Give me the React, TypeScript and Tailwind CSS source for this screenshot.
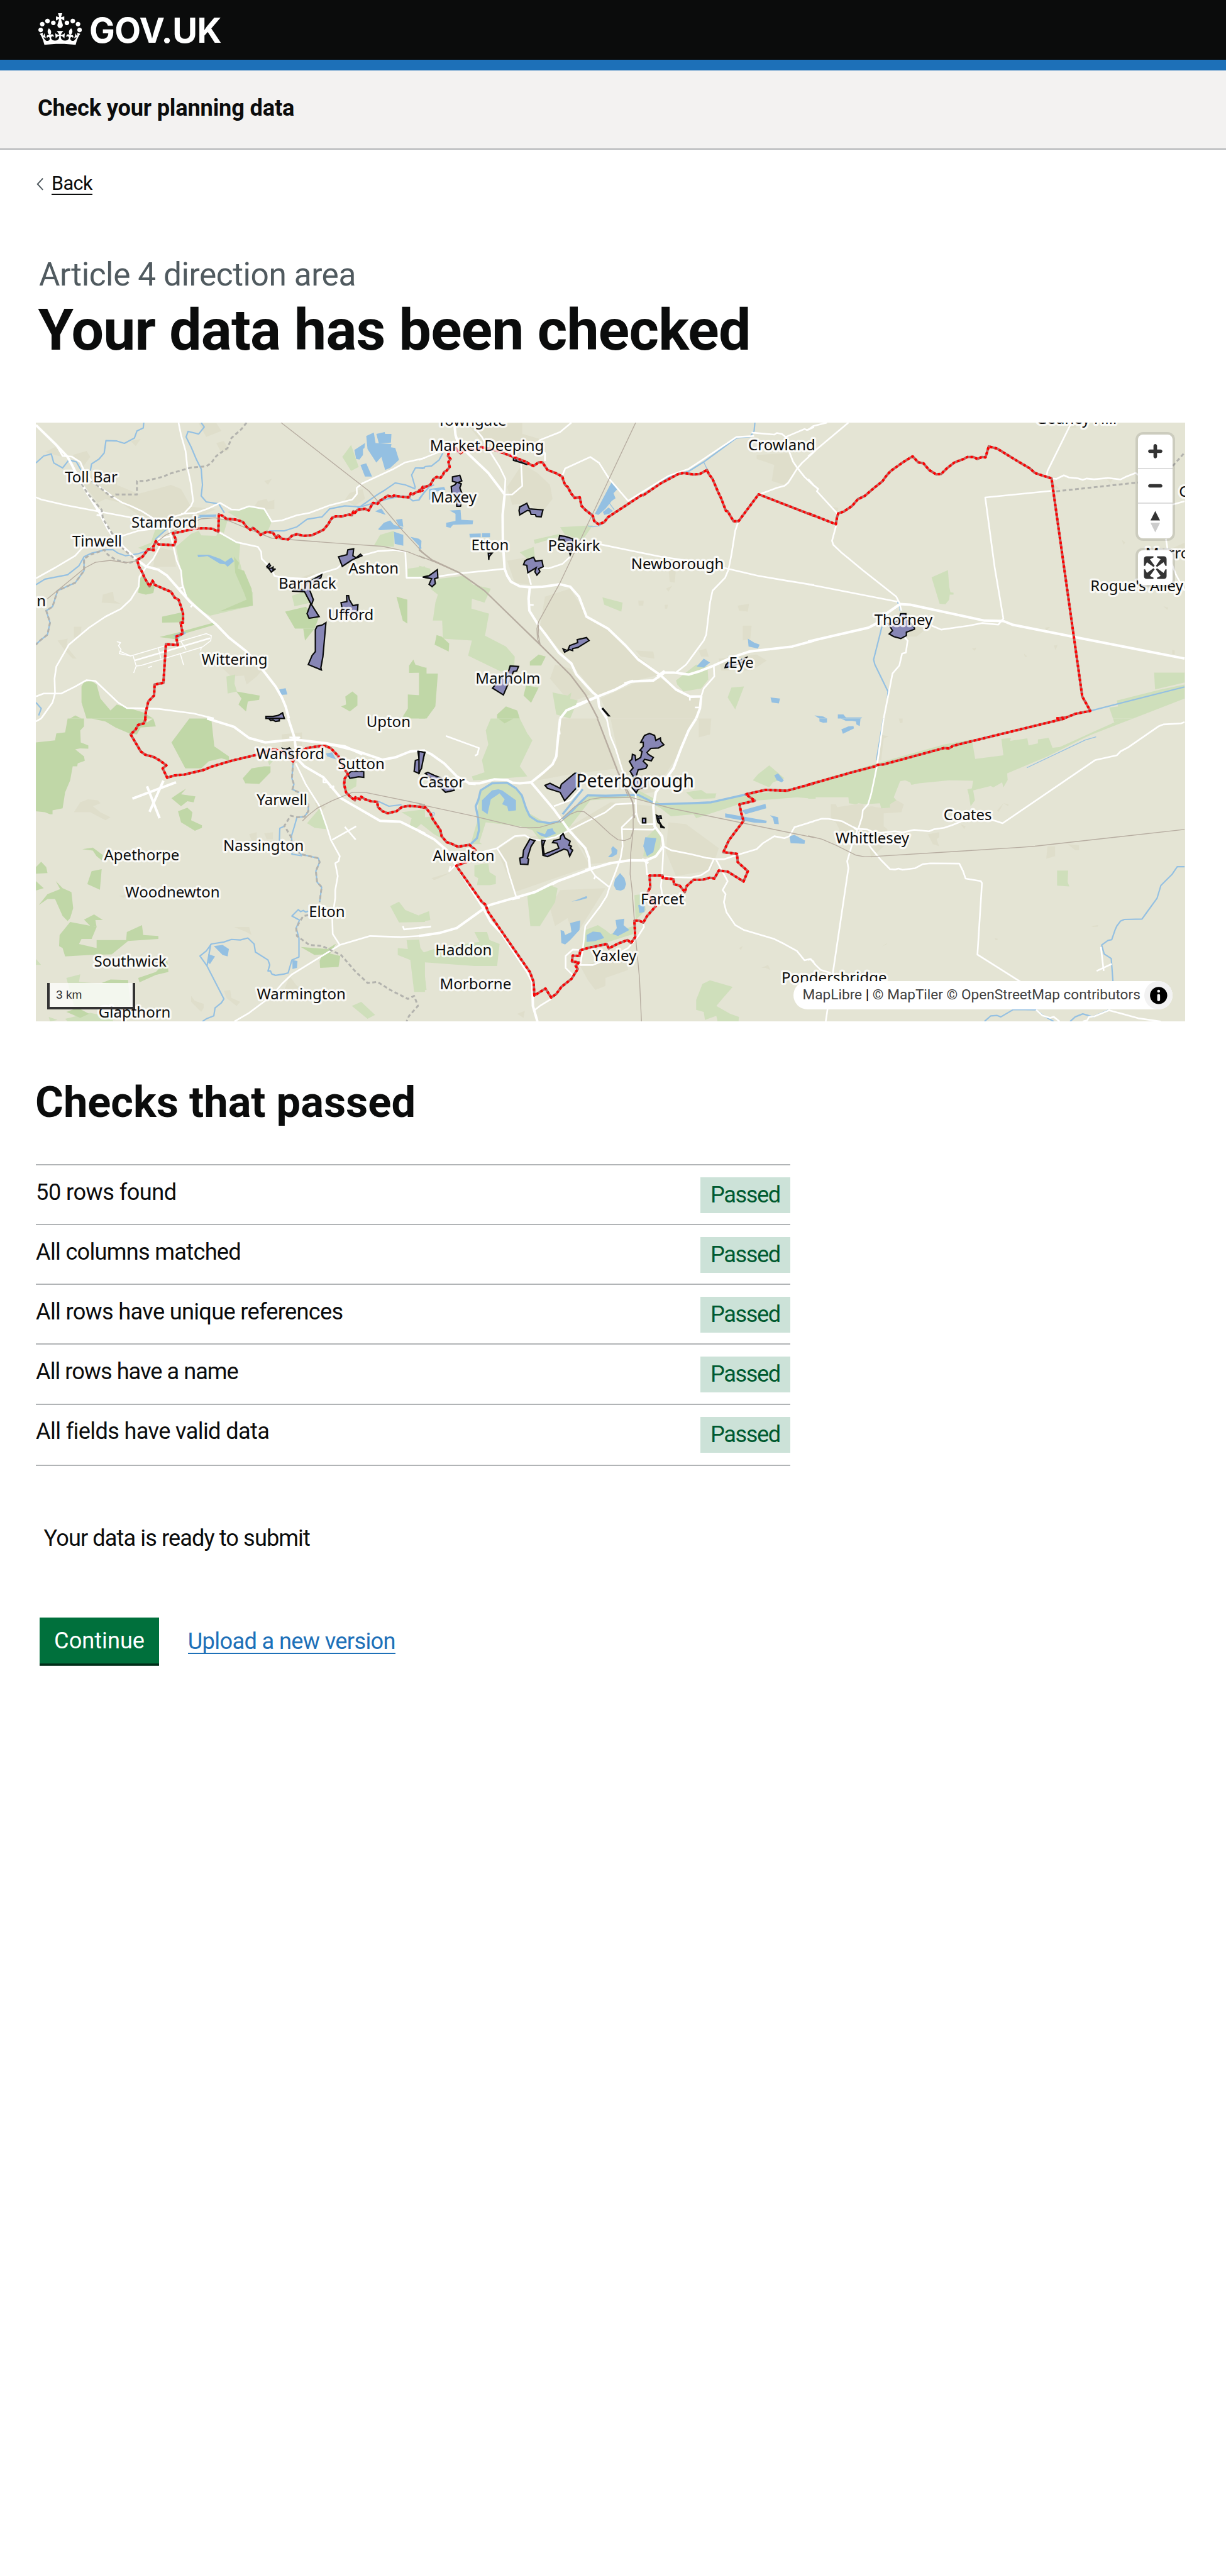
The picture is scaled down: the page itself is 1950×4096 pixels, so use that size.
const sans = "font-['Roboto','Liberation_Sans',sans-serif]";

type Layer =
  | "urban"
  | "grass"
  | "wood"
  | "water"
  | "river"
  | "wideRiver"
  | "thinRiver"
  | "rail"
  | "mainRail"
  | "path"
  | "minor"
  | "road"
  | "trunk"
  | "area"
  | "boundary";

type Sheet = { x: number; y: number } & Partial<Record<Layer, string[]>>;

/* The map is surveyed in six sheets, each with its own origin and drawn on the same grid. */
const sheets: Sheet[] = [
  {
    x: 50,
    y: 700,
    urban: [
      "215,330 260,260 350,270 345,330 430,375 560,330 600,350 640,440 740,450 560,560 490,540 420,470 360,420 300,400 270,420",
      "860,460 890,440 905,410 940,400 945,415 970,405 970,450",
      "1250,405 1270,370 1320,350 1330,400 1290,435",
      "1060,800 1130,770 1080,870 1040,860",
      "60,165 100,140 120,160 130,190 100,180",
      "170,180 225,160 240,190 210,240",
      "670,20 740,20 760,60 700,90",
      "740,120 770,110 790,155 760,170",
      "750,1230 930,1245 900,1290 860,1330 850,1285 800,1290",
      "110,1110 150,1100 145,1140 185,1200 170,1200 140,1160",
      "175,1040 205,1040 200,1090 175,1095",
      "500,640 570,660 580,740 490,740",
      "290,880 330,865 335,910 360,925 285,920",
      "400,110 440,100 420,135",
      "930,310 960,300 945,330",
    ],
    grass: [
      "580,640 640,575 670,560 680,583 740,585 745,570 800,600 835,620 830,700 850,800 885,870 885,935 715,985 680,960 620,880 600,760",
      "748,500 785,505 770,570 752,560",
      "785,465 875,438 935,455 958,520 945,560 915,580 880,550 850,515",
      "500,545 540,550 460,660 430,645 480,620",
      "1240,190 1275,130 1305,240 1275,260",
      "1390,580 1445,560 1445,640 1365,635",
      "780,1290 815,1280 812,1325 822,1365 785,1375",
      "1040,885 1090,865 1115,920 1050,938",
      "1500,750 1568,738 1568,790 1500,790",
    ],
    wood: [
      "430,870 437,800 450,780 470,835 497,830 490,872 460,880",
      "750,965 860,905 850,870 815,770 810,690 830,720 825,750 850,760 880,850 885,935",
      "525,990 605,968 608,1018 525,1020",
      "515,1092 580,1072 730,1020 735,1030 600,1080 590,1105",
      "1013,965 1095,940 1145,1000 1130,1050 1052,1050",
      "1085,1050 1130,1050 1092,1110",
      "1455,890 1498,905 1498,1025 1480,1010",
      "205,1340 215,1318 245,1312 265,1330 280,1400 320,1460 345,1430 450,1470 490,1500 225,1500 205,1420",
      "820,1365 912,1385 910,1407 865,1415 858,1465 828,1430 840,1400",
      "1235,1440 1255,1430 1252,1390 1280,1365 1300,1385 1300,1435 1270,1465",
      "1505,1235 1522,1205 1530,1230 1568,1245 1568,1270 1505,1272",
      "1500,1380 1568,1385 1568,1500 1475,1500 1500,1450",
      "160,1500 180,1485 205,1500",
    ],
    water: [
      "1335,85 1365,68 1372,120 1435,125 1433,142 1450,145 1465,205 1430,245 1410,255 1395,190 1375,218 1340,150",
      "1375,75 1408,65 1410,75 1435,75 1433,118 1385,122",
      "1288,155 1330,120 1328,145 1322,150 1322,180 1308,203 1295,200",
      "1312,230 1335,222 1358,288 1330,288",
      "1370,462 1395,448 1412,480",
      "1382,552 1405,520 1430,508 1445,530 1482,545 1480,550 1390,557",
      "1452,505 1478,500 1482,540 1465,535",
      "1445,565 1482,580 1482,635 1448,625",
      "1510,590 1545,600 1555,650",
      "665,680 710,680 755,700 775,715 800,693 810,712 785,740 775,728 755,725 705,687 668,692",
      "670,480 740,478 740,490 680,492",
      "570,1085 610,1065 622,1072 585,1100",
      "990,1355 1015,1348 1022,1380 995,1382",
    ],
    river: [
      "452,18 450,45 425,60 415,95 375,122 345,110 302,108 295,170 275,200 245,225 240,260",
      "24,220 55,185 85,175 95,220 130,245 155,205 185,215 205,260",
      "680,18 692,40 670,75 628,62 620,90 640,140 660,200 680,250 685,330 680,385 700,415 750,425 772,470",
      "24,830 60,802 150,780 195,735 215,690 245,672 300,655 330,655 350,672 380,685 430,675 490,650 500,600 540,555 600,510 680,490",
      "950,560 1010,560 1060,540 1100,502 1160,490 1190,450 1250,435 1310,440 1380,378 1410,355 1450,320 1490,330 1530,350",
      "1530,345 1515,280 1530,245 1568,245",
      "1300,445 1420,400 1480,385 1500,390 1520,410 1545,405 1568,360",
      "24,1420 45,1450 35,1485",
      "215,700 215,760 180,820 110,860 90,940 65,960 80,1020 70,1080 40,1110 24,1130",
    ],
    path: [
      "860,18 840,50 800,95 785,145 740,185 720,220 700,237 640,243 560,272 525,290 460,310 425,310 425,378 340,378 325,392 245,310",
      "205,325 230,375 285,455 290,500 330,580 370,650 425,710 390,722 340,705 310,680 295,655 240,680 215,700 215,760 180,820 110,860 90,940 65,960 80,1020 70,1080 40,1110 24,1130",
    ],
    rail: [
      "997,18 1345,360 1390,425 1480,560 1568,680",
      "1568,700 1500,665 1400,638 1250,625 1040,605 960,597 880,557 790,510 735,495 680,500 620,535 540,580 500,620 425,710 380,720 320,708 260,718 220,745 70,900",
    ],
    minor: [
      "355,1162 400,1187 700,1075 720,1085 718,1110 685,1142 440,1235 422,1237 410,1187",
      "345,1115 360,1120 352,1135 362,1155 355,1175 400,1187",
      "422,1237 412,1272",
      "597,1175 610,1232",
      "510,1150 520,1200",
      "600,1115 620,1155",
      "470,1245 485,1238",
      "680,1145 678,1160",
    ],
    road: [
      "105,130 130,185 165,188 200,215 212,250 245,310 330,390 365,418 400,435 445,462 490,498 540,500",
      "24,392 45,403 145,432 270,462 400,493 440,500",
      "590,18 600,80 618,160 625,240 640,330 648,410 640,435 610,475 570,490",
      "600,475 660,470 710,447 755,420 800,453 830,455 870,437 930,450 960,513 1000,508 1060,482 1110,470 1190,432 1280,403 1298,375 1297,345 1320,322 1440,252 1490,217 1568,195",
      "24,798 100,745 180,685 212,640 330,600 380,580 430,560 500,548 550,545",
      "550,545 560,590 570,640 583,710 600,760 605,830 620,885 600,870 590,850 610,840",
      "565,585 510,600 515,640 490,700 465,735 435,790 432,840 400,905 360,952 300,990 235,1045 155,1130 105,1240 98,1300 100,1375 90,1420 45,1500",
      "24,1390 55,1375 125,1375 180,1340 225,1308 260,1312 300,1360 350,1420 385,1448 510,1452 650,1475 730,1500",
      "748,565 820,617 905,640 918,665 920,700 960,750 970,785 1000,795 1100,800 1150,775 1220,748 1240,725 1300,690 1380,662 1450,656 1490,665 1495,795 1568,795",
      "415,1210 715,1098",
      "262,455 285,455 285,485 265,480",
      "650,925 638,942",
    ],
    trunk: [
      "24,30 105,130 150,190 165,225 205,325 275,465 310,550 330,590 370,640 425,705 460,738 510,755 545,785 590,850 635,915 740,1030 790,1095 860,1165 920,1250 975,1340 1000,1395 1015,1440 1028,1500",
    ],
    area: [
      "1225,690 1258,680 1262,655 1285,650 1282,685 1295,695 1312,677 1318,685 1280,705 1240,738",
      "940,740 950,725 955,735 945,745 958,748 965,742 965,755 975,750 958,767 950,752",
      "1040,862 1058,852 1090,855 1100,820 1158,780 1155,795 1115,830 1110,855 1125,905 1118,930 1148,990 1108,998 1100,975 1115,925 1090,865",
      "1235,920 1258,915 1257,885 1265,885 1268,905 1282,935 1302,930 1300,965 1262,985 1240,955",
      "1133,1055 1140,1038 1160,1032 1175,1020 1163,1190 1155,1245 1157,1257 1105,1230 1120,1185 1133,1165",
      "937,1490 965,1490 985,1485 1003,1472 1010,1500 937,1500",
    ],
    boundary: [
      "1568,340 1552,352 1558,358 1530,368 1520,378 1512,372 1505,392 1475,390 1445,383 1438,390 1420,384 1400,402 1390,408 1380,425 1362,420 1355,435 1345,458 1330,450 1300,455 1290,470 1284,462 1278,482 1265,478 1240,488 1215,487 1200,495 1192,508 1185,525 1175,540 1165,555 1140,570 1120,582 1085,585 1060,577 1040,585 1025,603 1000,600 985,582 978,595 965,570 940,565 915,580 908,568 885,545 875,555 860,540 845,515 815,503 780,500 765,485 750,478 748,565 725,550 690,547 650,550 600,565 568,572 580,605 573,632 510,628 500,612 490,640 492,657 470,652 460,668 447,690 426,706 433,740 445,765 455,795 475,838 487,810 495,830 530,850 560,865 575,895 590,905 600,940 608,975 608,1020 598,1020 607,1075 580,1090 587,1132 540,1128 530,1322 495,1330 493,1385 470,1415 460,1470 458,1502",
    ],
  },
  {
    x: 700,
    y: 700,
    urban: [
      "190,25 410,20 410,75 480,100 400,170 300,160 260,130",
      "350,340 410,225 470,270 520,330 530,400 480,480 440,420 370,430",
      "350,710 440,690 440,830 380,820",
      "500,890 600,850 670,990 760,1060 830,1150 960,1280 840,1315 710,1390 600,1220 480,1040",
      "720,1400 860,1320 960,1300 1060,1380 1120,1400 1100,1500 760,1500",
      "1340,180 1465,170 1500,260 1450,330 1400,310 1410,230 1340,200",
      "1190,1200 1340,1180 1380,1210 1320,1260 1200,1260",
      "1285,1035 1320,1035 1315,1100 1285,1110",
      "540,1230 600,1250 680,1380 600,1420 520,1300",
      "1265,935 1310,925 1305,965 1270,960",
      "990,750 1020,750 1015,820 995,815",
      "980,850 1005,835 990,865",
      "870,910 892,910 890,935 872,935",
      "975,930 988,930 985,950 976,950",
      "860,1160 930,1165 935,1200 880,1190",
      "1110,1160 1140,1150 1150,1190 1120,1190",
    ],
    grass: [
      "80,800 180,785 215,830 285,850 260,920 210,900 208,950 278,975 262,1085 345,1140 380,1190 378,1245 325,1265 195,1185 210,1110 95,1100 92,1010 55,1010 65,920 75,880 45,850",
      "560,542 690,532 650,605 580,580",
      "400,668 455,640 460,690 430,700",
      "455,605 560,575 560,588 460,625",
      "728,893 808,920 803,965 735,930",
      "1020,1310 1100,1230 1145,1240 1148,1305 1120,1350 1050,1365 1025,1330",
      "1225,1395 1240,1345 1290,1340 1255,1455",
      "530,1370 590,1385 605,1370 600,1400 630,1410 600,1500 545,1480",
      "0,735 45,750 45,800 0,800",
    ],
    wood: [
      "70,1082 90,1090 120,1125 118,1165 62,1130",
      "440,1215 475,1180 503,1190 485,1235 440,1235",
      "0,1245 30,1245 30,1275 75,1275 65,1440 30,1500 0,1500",
      "425,1335 475,1345 445,1422 415,1385",
      "310,1480 345,1440 390,1460 400,1500 310,1500",
    ],
    water: [
      "765,315 788,350 772,372 780,397 765,410 740,450 712,480 698,475",
      "730,465 752,443 770,460 755,475 735,480",
      "122,458 165,455 168,505 215,508 213,527 135,530 125,545 108,540 108,520 145,510 145,475",
      "200,575 245,573 245,592 202,593",
      "250,572 282,572 282,592 250,592",
      "40,350 100,340 105,355 60,365 60,400 40,405",
      "1305,1100 1330,1120 1352,1130 1345,1150 1308,1140",
      "1102,1240 1130,1200 1155,1220 1130,1245",
      "1395,1395 1433,1400 1428,1425 1400,1420",
      "0,600 10,610 8,650 0,655",
    ],
    river: [
      "1333,18 1330,60 1315,88 1260,95 1130,215 1070,262 1000,285 890,378",
      "0,400 20,370 40,340 60,330",
      "0,245 15,248 25,238 50,235 80,205 95,170",
      "690,480 650,440",
    ],
    thinRiver: ["1130,215 1143,250", "670,535 690,540 715,535 740,515", "755,420 775,455"],
    rail: [
      "860,18 620,660 560,820 475,1015 468,1050 470,1100 480,1130",
      "475,1030 473,1080 482,1135",
      "0,685 60,715 160,770",
    ],
    mainRail: ["0,655 50,705 160,770 260,860 480,1130 600,1280 660,1380 710,1500"],
    road: [
      "1568,165 1520,220 1500,250 1465,320 1450,335 1420,345 1350,378 1268,512 1255,560 1240,680 1228,755 1215,795 1165,860 1155,920 1140,1080 1130,1110 1095,1170 1060,1230 1020,1270",
      "720,628 960,690 1080,712 1225,750 1345,785 1460,810 1568,832",
      "1320,68 1410,78 1420,70 1440,75 1455,90 1470,165 1485,215 1505,250 1530,290 1568,335",
      "1455,90 1530,50 1540,55 1568,40",
      "1330,85 1260,90 1130,200 1070,250 990,285 960,308 830,410 755,300 715,220 680,190 580,248 570,280",
      "605,18 560,65 480,105 460,140 500,170 500,210",
      "230,60 250,90 285,170 320,240 343,300 340,378 370,378 410,335 405,215",
      "0,205 80,165 120,140",
      "600,690 570,725 515,748 480,745",
      "0,795 80,788 150,775 340,750",
      "430,760 445,830",
      "1170,1235 1172,1290 1130,1350 1120,1390",
      "435,905 438,930 455,932",
      "1075,1410 1075,1395 1120,1390",
      "1095,1445 1115,1445",
      "480,745 460,735 440,735",
    ],
    trunk: [
      "140,18 145,80 155,120 200,180 275,270 340,378 332,480 333,620 340,750 350,785 365,815 400,838 440,843 490,840 560,828 600,840 635,890 665,990 750,1050 820,1135 870,1205 960,1285",
      "440,843 435,900 438,960 475,1035 500,1075 555,1170 605,1225 625,1280 690,1370 710,1390 715,1440 745,1500",
      "560,1500 585,1460 640,1430 710,1390 780,1355 840,1315 930,1310 975,1270 1010,1270 1070,1280 1110,1265 1170,1235 1240,1195 1310,1165 1480,1140 1568,1110",
      "960,1285 1020,1355 1075,1390 1120,1390 1115,1450 1100,1500",
      "625,1432 710,1390",
      "815,1325 850,1312",
      "945,1290 975,1262",
    ],
    area: [
      "133,290 162,282 170,310 155,318 168,325 162,345 170,370 172,395 165,437 150,437 148,400 130,370 128,338 142,330 150,318 133,312",
      "400,440 428,422 438,450 492,455 485,490 465,488 462,478 445,478 440,460 430,458 400,480 397,458",
      "375,192 395,200 430,215 428,228 410,220 375,207",
      "558,585 580,588 610,600 612,640 600,680 590,640 575,605 555,605",
      "275,672 290,672 278,690 277,705",
      "415,730 420,712 428,705 455,693 462,712 488,708 493,740 475,750 480,765 468,782 460,765 465,745 432,770 428,733",
      "15,792 40,785 73,755 75,795 62,800 65,825 52,840 40,828 50,800",
      "572,1152 590,1160 598,1135 630,1120 628,1105 665,1095 675,1110 630,1145 610,1150 610,1160 598,1155 578,1168",
      "362,1237 395,1240 388,1262 375,1265 335,1382 292,1348 310,1320 355,1265",
      "730,1450 755,1487 752,1487 728,1452",
      "1215,1245 1218,1232 1225,1222 1260,1215 1300,1195 1290,1215 1240,1240",
      "385,200 388,212",
      "405,208 408,220",
    ],
    boundary: [
      "1568,485 1348,377 1268,512 1248,512 1225,462 1218,460 1200,400 1185,360 1165,300 1150,275 1143,255 1115,275 1090,278 1050,270 1030,275 960,322 890,382 885,380 750,492 735,517 712,527 695,510 690,485 660,455 645,435 638,392 618,395 605,375 590,340 580,330 572,305 570,290 545,272 510,255 490,217 475,217 455,235 445,230 420,212 350,178 300,155 245,140 235,155 200,152 175,160 165,172 145,145 120,160 115,185 125,200 117,215 122,240 110,258 100,265 95,280 85,295 70,290 58,300 45,330 30,338 15,340 5,362 0,350",
    ],
  },
  {
    x: 1350,
    y: 700,
    urban: [
      "95,440 120,445 115,475",
      "965,300 975,320 1000,355 975,345",
      "400,1040 480,1040 430,1090 395,1090",
      "1440,650 1494,620 1494,655",
      "1245,605 1258,618 1252,630",
      "650,1150 667,1145 662,1162",
      "857,1175 870,1190 860,1192",
      "975,1135 990,1132 982,1158",
      "940,1045 960,1042 945,1062",
      "1410,938 1430,945 1425,955",
      "1445,1155 1455,1160 1455,1180 1445,1178",
      "1185,300 1215,292 1200,320",
      "1020,30 1060,30 1065,45 1040,45",
    ],
    grass: [
      "490,793 555,757 560,840 565,868 577,870 577,880 562,880 560,905 545,928 522,925",
      "1373,1270 1494,1270 1494,1320 1377,1355",
      "1195,1445 1230,1440 1225,1410 1400,1355 1494,1330 1494,1400 1290,1500 1210,1500",
    ],
    water: ["25,1485 60,1490 75,1500 45,1500", "118,1480 140,1480 150,1495 215,1495 210,1500 118,1500"],
    river: ["355,915 365,945 365,960", "293,1040 260,1205 265,1230 317,1365 315,1400", "1120,1462 1494,1342"],
    path: ["985,362 1309,318", "1447,235 1494,168"],
    road: [
      "1045,18 950,260 945,295",
      "965,297 985,300 1015,282 1035,293 1070,297 1090,305 1105,298 1135,302 1190,295 1240,303 1260,290 1300,270 1340,310",
      "965,360 703,393 740,740 775,1000 755,1030 690,1022 640,1035 528,1055 490,1035",
      "160,18 0,187",
      "75,18 20,35 0,55",
      "0,300 25,335 40,350 35,362 115,472 110,540 95,610 100,630 135,672 170,708 215,755 350,890 362,920 370,960",
      "0,828 355,915",
      "1447,428 1494,412",
      "1420,600 1430,680 1460,780 1494,860",
      "380,1090 395,1110 388,1170 373,1175 362,1235 335,1275 325,1340 300,1500",
    ],
    trunk: ["0,1115 240,1045 270,1025 310,975 365,927 405,930 700,1010 775,1012 810,1030 1090,1100 1494,1200"],
    area: [
      "367,975 388,975 390,1000 422,1045 422,1053 390,1068 390,1085 368,1100 340,1090 322,1077 335,1060 318,1025 360,1010",
    ],
    boundary: [
      "985,1500 1025,1495 1060,1477 1120,1462 1088,1390 966,297 930,283 900,270 880,247 850,225 830,210 750,148 717,137 704,192 690,190 672,200 655,190 632,190 618,200 580,218 550,248 528,275 508,277 480,255 458,222 437,217 415,187 400,198 375,218 328,260 310,285 295,312 262,345 225,385 197,402 175,435 140,465 120,472 115,490 110,527 0,472",
    ],
  },
  {
    x: 50,
    y: 1200,
    urban: [
      "175,470 200,420 230,405 270,410 280,425 250,440 280,470 320,495 300,510 240,470",
      "1000,80 1080,70 1080,170 1000,140",
      "640,1390 655,1415 690,1430 690,1450 680,1470 640,1420",
      "770,1365 795,1360 800,1400 835,1420 820,1440 780,1400",
      "810,1045 870,1045 880,1085 860,1070",
      "1030,1290 1060,1340 1080,1350 1010,1360",
      "870,580 900,570 900,620 880,610",
      "1130,420 1175,440 1150,480",
      "355,890 385,880 375,900",
      "930,575 965,570 965,605 940,605",
    ],
    grass: [
      "1255,305 1298,290 1295,340 1255,370",
      "1100,525 1150,450 1180,555 1130,548",
      "1430,940 1465,918 1490,960 1568,1000 1568,1020 1465,1022",
      "1460,1150 1500,1155 1495,1110 1545,1108 1550,1150 1568,1180 1568,1370 1525,1370 1510,1210 1460,1185",
      "1278,1440 1315,1420 1370,1485 1340,1505",
      "145,1300 200,1282 195,1320 285,1330 390,1315 400,1440 235,1450 175,1440",
      "24,1205 45,1235 24,1235",
      "1475,470 1568,455 1568,510 1530,555 1505,545 1515,500",
      "75,1495 110,1510 80,1518",
      "140,1505 240,1475 330,1500 330,1518 150,1518",
      "945,215 970,205 950,235",
    ],
    wood: [
      "24,120 100,110 105,75 140,70 150,0 215,0 215,40 200,60 202,120 232,135 232,152 200,150 180,155 215,190 218,212 190,225 188,240 170,240 160,310 140,370 130,450 90,460 90,480 80,480 60,470 24,465",
      "245,0 460,0 465,20 490,0 500,40 440,45 425,80 395,75 340,45 300,15",
      "633,0 720,0 732,140 790,190 790,210 760,200 710,215 680,250 617,250 562,120",
      "845,300 880,250 930,240 955,240 955,270 910,328 855,325",
      "562,400 590,375 620,352 600,380 657,390 650,420 625,415 600,440",
      "588,465 625,447 645,470 640,510 683,535 683,548 655,563 600,520",
      "208,655 250,647 290,685 285,710 265,690 250,662",
      "24,745 45,718 65,745 70,775 24,778",
      "245,765 285,755 278,858 228,830",
      "24,815 55,850 24,862",
      "35,935 70,880 120,855 103,815 130,850 165,870 172,950 160,1000 150,1015 130,990 100,905 70,905",
      "215,1008 255,982 290,1010 260,1010 265,1045 240,1040",
      "160,1020 265,1045 245,1105 205,1105 195,1130 265,1150 265,1110 382,1110 385,1070 445,1035 450,1085 510,1090 510,1105 390,1115 325,1182 235,1185 140,1192 130,1150 116,1140 118,1085",
      "430,1300 500,1270 545,1210 550,1270 500,1285 435,1322",
      "285,1325 320,1308 390,1310 390,1328",
      "1075,1145 1180,1155 1215,1128 1190,1180 1130,1185",
      "1150,1215 1165,1170 1232,1190 1225,1245 1152,1250",
      "145,1470 190,1450 235,1480 200,1500",
    ],
    water: [
      "730,1140 765,1135 790,1155 785,1192 765,1185",
      "708,1180 735,1192 715,1230 708,1225",
      "1042,1210 1062,1215 1060,1250 1042,1255",
      "1175,175 1200,170 1215,205 1180,190",
    ],
    river: [
      "1045,215 1040,300 1048,330 1042,355 1070,372 1105,430 1105,465 1090,492 1060,495 1050,540 1038,590 1042,640 1075,680 1145,700 1150,720 1135,765 1140,820 1158,845 1150,920",
      "1105,965 1095,970 1085,962 1075,968 1065,958 1040,990 1070,1010 1057,1050 1068,1100 1068,1195 1040,1210 1025,1275 1010,1280 975,1287 960,1280 955,1265 945,1265 952,1235 945,1210 895,1170 890,1130 865,1100 835,1110 800,1107 770,1120 720,1130 700,1165 675,1190 703,1240 770,1405 760,1425 735,1450 730,1490 700,1505 685,1518",
      "718,1130 703,1240",
      "1010,540 992,550 990,620",
      "1042,640 1040,680 1080,688",
      "1382,415 1425,440 1475,432",
    ],
    path: [
      "1045,215 1040,300 1048,330 1042,355 1070,372 1105,430 1105,465 1090,492 1060,495 1035,487 1010,538 1035,590 1042,640 1075,680 1145,700 1150,720 1135,765 1140,820 1158,845 1150,920",
      "1105,985 1085,990 1070,1020 1057,1050 1060,1090 1110,1135 1160,1140 1235,1185 1290,1265 1340,1325 1380,1320 1430,1360 1500,1405 1525,1390 1540,1440 1505,1490 1495,1518",
    ],
    rail: ["1568,432 1330,370 1280,370 1200,412 1140,450 1105,485 1082,513"],
    road: [
      "1055,225 1095,330 1150,440 1180,550 1195,610 1230,690 1225,715 1212,725 1222,790 1212,860 1212,900 1200,1000 1202,1080 1230,1135",
      "812,1518 870,1475 960,1390 1000,1330 1040,1282 1230,1135 1350,1090 1470,1095 1568,1088",
      "1200,608 1295,540",
      "1250,543 1293,607",
      "1480,1040 1485,1057 1568,1045",
      "24,15 45,0",
      "1165,295 1165,320 1180,320",
      "1190,345 1205,340 1205,350",
      "1030,95 1070,95 1050,115",
    ],
    trunk: [
      "1025,0 1050,95 1060,200 1090,240 1165,295 1235,400 1390,513 1470,517 1568,578",
      "703,0 810,42 870,98 935,120 1050,105 1180,125 1290,160 1400,207 1450,195 1510,165 1568,160",
      "407,402 580,320",
      "465,340 515,500",
      "530,312 475,468",
      "1180,128 1250,140 1320,180",
    ],
    area: [
      "1262,280 1275,265 1325,265 1325,295 1305,292 1270,300",
      "1540,165 1568,170 1545,275 1525,265 1530,210 1545,205",
      "1003,150 1015,155 1030,148 1045,165 1040,195 1015,180",
      "948,0 955,10 965,8 975,15 990,12 990,0",
    ],
    boundary: [
      "460,0 452,25 430,32 420,55 400,80 440,165 458,182 490,192 515,210 542,235 527,250 545,297 575,285 610,282 690,258 720,242 800,212 900,182 950,160 970,155 1000,165 1030,200 1045,215 1060,190 1075,165 1100,148 1140,140 1175,138 1195,150 1225,190 1240,235 1262,280 1250,300 1247,330 1255,370 1270,390 1290,410 1292,395 1310,405 1315,392 1330,405 1355,415 1378,418 1382,445 1400,465 1420,475 1455,465 1475,445 1500,438 1530,440 1568,447",
    ],
  },
  {
    x: 700,
    y: 1200,
    urban: [
      "555,0 710,0 790,250 600,280 470,310 550,200",
      "760,0 1100,0 1060,90 1030,180 930,370 870,380 800,230",
      "380,600 600,570 680,740 540,800 380,870 310,660",
      "600,540 760,420 940,440 970,620 900,700 680,730",
      "990,520 1060,530 1190,650 1160,760 1020,790 980,670",
      "560,860 740,850 700,930 640,1050 600,1040 590,1000 540,1040 520,950",
      "640,1240 820,1180 830,1260 740,1300 740,1340 700,1360 670,1310",
      "1110,0 1160,0 1155,80 1110,95",
      "50,800 130,770 80,800 60,810",
      "390,1480 420,1465 415,1500",
      "1360,1250 1385,1235 1395,1260 1375,1250",
      "1270,1150 1285,1140 1278,1160",
    ],
    grass: [
      "285,0 400,0 430,75 450,110 400,240 430,290 340,300 215,310 210,290 260,270 250,210 275,130 265,60",
      "240,360 290,320 350,325 400,370 430,470 500,520 560,515 620,440 680,385 850,385 870,360 930,400 960,430 1160,420 1290,385 1330,410 1270,430 1100,500 1090,480 1000,490 960,450 930,430 860,395 680,410 600,540 560,590 480,610 450,560 400,540 265,520 240,620 250,630 205,630 230,520",
      "1325,310 1345,280 1390,235 1450,300 1405,320 1390,345",
      "1060,370 1120,358 1140,375 1180,375 1175,400 1090,405",
      "1290,382 1460,362 1568,325 1568,402 1500,395 1400,405 1330,412",
      "430,890 520,835 550,850 540,920 480,1040 442,1040",
      "0,500 50,490 90,590 130,630 60,580 0,520",
      "220,735 275,725 280,770 305,790 305,830 280,835 230,835 235,800 220,790",
      "0,985 40,965 45,1010 0,1020",
      "220,1070 270,1070 280,1110 320,1130 310,1240 220,1240 0,1220 0,1180 70,1150 240,1120",
      "660,1060 710,1035 740,1060 760,1080 850,1040 850,1080 700,1140 650,1150",
      "855,885 890,880 900,960 860,1010",
      "940,550 960,600 955,660 925,700 890,690 900,600",
      "1100,1410 1125,1330 1155,1312 1245,1345 1200,1410 1180,1440 1235,1480 1270,1495 1268,1518 1185,1518 1180,1490 1135,1510 1130,1470 1100,1460",
      "0,1250 20,1250 30,1360 0,1365",
    ],
    wood: ["315,0 375,0 340,25"],
    water: [
      "250,410 290,360 315,355 330,360 385,410 385,460 355,465 350,440 330,430 340,405 320,375 285,405 272,480 250,460",
      "465,565 500,580 510,555 530,550 535,565 545,575 505,597 480,585",
      "898,595 942,600 930,670 905,690 890,640",
      "750,695 765,675 763,650 770,640 788,660 785,680 765,695",
      "798,775 815,800 822,830 815,855 800,863 782,858 773,835 778,805",
      "605,918 635,905 665,890 668,900 640,910",
      "870,935 895,930 895,970 875,975",
      "600,1025 640,1012 637,1060 600,1110 580,1132 565,1125 562,1060 575,1065 580,1085 605,1070",
      "780,1010 815,1003 812,1035 835,1060 790,1090 768,1080 785,1050",
      "665,1085 690,1068 720,1072 735,1100 700,1115 665,1120",
      "1215,475 1380,512 1378,525 1330,522 1215,495",
      "1282,460 1375,428 1378,450 1295,480",
      "1393,485 1425,495 1428,530 1410,528 1405,500",
      "1470,590 1490,583 1532,612 1530,628 1475,625",
      "1410,285 1425,275 1448,310 1440,320 1420,310",
    ],
    thinRiver: ["55,485 55,470 62,475 58,490"],
    wideRiver: [
      "205,630 230,600 238,560 235,500 225,440 235,410 245,360 290,325 350,322 385,350 408,385 425,450 440,490 470,515 520,525 560,515 610,460 640,420 670,385 740,387 870,383 905,405 940,430 1080,425 1160,420 1300,380",
      "570,480 650,355",
    ],
    rail: [
      "0,430 220,490 400,545 440,548 480,545 550,520 620,440 680,405 730,395 840,395 1000,450 1568,597",
      "560,520 600,480 630,465 655,467 700,510 760,580 790,608 815,612 840,600 852,550",
      "850,480 850,560 840,680 838,780 845,850 860,1100 875,1300 883,1518",
      "790,270 830,390",
    ],
    mainRail: ["708,0 790,270 830,370 848,420 855,500"],
    road: [
      "860,425 780,430 740,470 660,520 590,565 540,595 480,610 445,605 420,585 380,590 310,650 250,670",
      "310,650 345,720 355,770 385,890",
      "862,475 805,545 808,640 800,700 780,770 755,850 745,890 720,940 660,1040 650,1160 640,1235 690,1235 760,1200 830,1150 870,1090 893,1045 890,1025",
      "805,555 930,557 940,545",
      "535,440 600,410 640,355",
      "678,750 700,790 755,845",
      "700,790 695,805",
      "970,640 1000,660 1080,680 1140,698 1180,705 1210,705 1260,685 1340,655 1365,625 1410,590 1450,600 1470,590 1490,545 1568,515",
      "970,650 965,780 960,840 967,900",
      "900,712 905,780 1000,795 1080,797 1120,785 1150,760 1170,705",
      "1180,710 1225,815 1205,860 1217,880 1210,920 1220,970 1255,1035 1290,1060 1410,1105 1450,1130 1500,1165 1530,1212 1552,1205 1568,1220",
      "640,1160 610,1158 582,1190 582,1250 610,1285 600,1305",
      "525,1405 480,1440 460,1460",
      "107,88 238,148 232,180 222,187",
      "0,1050 48,1042",
      "145,735 120,765 125,740",
      "745,0 760,90 780,150 810,270 835,350 860,380 862,470 870,510 880,530 940,530",
    ],
    trunk: [
      "560,0 550,120 545,190 530,230 490,275 445,320 535,455 595,560 660,650 675,700 678,750",
      "0,165 25,165 50,180 100,225 150,290 200,325 240,325 300,305 350,308 370,322 400,325 445,320",
      "1100,0 1070,60 1040,150 1010,250 940,370 930,440 935,540 965,590 970,640 940,690 900,712 840,710 760,725 680,755 540,820 460,870 390,895 280,935 255,955 150,1050 80,1075 0,1090",
      "0,565 60,605 110,660 255,950 285,1020 330,1080 430,1270 450,1320 452,1440 470,1518",
      "660,760 700,745",
      "530,830 555,812",
      "370,905 400,895",
      "885,705 910,725",
      "555,50 557,80",
      "195,325 225,328",
    ],
    area: [
      "500,335 520,325 560,350 565,330 618,275 640,275 630,340 620,355 578,412 560,370 510,350",
      "915,75 935,85 940,110 958,98 960,115 972,132 950,148 920,150 905,170 910,180 930,195 922,212 895,205 890,215 907,235 900,250 870,257 863,285 855,300 838,265 850,248 835,215 845,205 847,180 858,185 860,210 880,195 885,165 877,160 890,140 890,120 880,120 895,85",
      "850,300 885,300 900,340 870,355 862,372 845,345",
      "440,605 460,612 445,640 430,700 435,705 432,732 403,730 400,700 412,695 415,660",
      "487,610 500,612 492,640 497,680 555,650 548,625 530,622 535,612 560,605 562,590 572,577 580,600 600,615 595,635 605,640 600,650 610,660 598,690 590,660 575,655 510,692 492,685",
      "887,500 900,500 900,523 887,523",
      "942,485 950,490 960,488 962,500 950,498 955,520 965,540 975,548 960,545 958,530 948,520",
      "25,275 35,270 60,285 130,320 140,360 105,370 85,345",
      "0,165 22,170 10,250 0,270",
    ],
    boundary: [
      "0,442 25,445 45,475 55,505 85,560 90,590 110,620 130,628 155,643 200,633 225,660 200,690 195,715 148,738 250,920 263,932 275,970 440,1270 455,1320 458,1388 502,1353 518,1385 525,1398 545,1380 565,1345 605,1305 630,1255 622,1240 635,1222 607,1218 610,1188 637,1190 640,1162 670,1150 745,1130 753,1152 790,1128 828,1110 842,1125 858,1095 855,1013 875,1013 890,1023 905,990 940,940 920,910 908,870 918,845 915,787 967,787 967,800 1010,805 1012,830 1035,838 1055,870 1062,840 1090,808 1125,808 1155,798 1172,802 1190,762 1225,767 1288,817 1305,765 1265,720 1262,678 1208,670 1230,610 1288,513 1278,470 1272,430 1333,412 1297,380 1375,358 1460,362 1568,325",
    ],
  },
  {
    x: 1350,
    y: 1200,
    urban: [
      "90,430 110,430 115,445 190,430 220,430 220,450 250,440 300,450 345,405 380,430 370,470 300,475 300,540 315,555 300,640 250,700 240,620 130,570 110,520 90,510",
      "475,580 520,570 520,595 510,605 520,640 495,630",
      "950,640 980,640 980,690 945,703",
      "1030,630 1075,635 1075,660 1060,660",
      "750,460 775,425 765,450 755,470",
      "775,425 795,430 795,440",
      "1125,1040 1150,1035 1150,1043 1130,1045",
      "295,1140 315,1125 308,1135",
      "740,1100 755,1105 745,1112",
      "605,530 625,540 620,555",
      "360,0 375,0 375,20 365,25",
      "285,80 320,90 300,100 290,210 275,210",
    ],
    grass: [
      "0,325 370,190 540,130 650,105 663,203 775,185 767,103 805,98 802,112 870,100 875,135 912,125 912,105 955,97 970,147 1000,143 1130,75 950,190 790,275 792,308 775,345 770,320 735,345 725,338 655,360 662,410 645,440 638,385 632,355 650,350 655,312 560,310 440,325 410,333 405,320 385,310 365,315 340,395 350,410 325,430 325,447 290,450 285,425 225,430 200,425 190,430 162,425 160,395 30,395 30,402 0,402",
      "1000,143 1130,68 1250,0 1290,0 1130,78 1000,150",
      "1210,0 1250,0 1215,20",
      "988,762 1032,762 1030,820 1037,842 988,838",
    ],
    water: [
      "45,0 75,0 75,20 60,22 45,15",
      "130,0 208,0 205,38 192,30 190,15 175,12 150,12",
      "132,55 160,40 180,38 182,50 138,77",
    ],
    river: [
      "1494,743 1465,743 1445,780 1400,837 1385,900 1345,970 1325,1005 1255,1007 1240,1015 1225,1040 1218,1060 1205,1108 1190,1112 1165,1135 1175,1180 1203,1203 1210,1320",
      "700,1518 725,1490 750,1488 765,1495 815,1458 905,1460 935,1490 975,1518",
      "1040,1518 1060,1495 1090,1480 1130,1495 1190,1462",
    ],
    thinRiver: ["298,0 270,210", "868,247 1100,108 1143,92"],
    rail: ["0,588 55,605 110,635 190,685 225,693 280,690 600,665 850,645 900,640 1494,556"],
    road: [
      "300,0 273,240 265,290 250,380 238,430 217,460 215,490 200,550",
      "0,523 40,508 55,502 80,503 135,515 175,542 195,553 235,556 260,570 290,572 345,565 375,571 420,558 480,565 500,555 540,548 570,535 610,515 700,505 735,510 772,525 1140,208 1225,185 1240,165 1270,145 1390,40 1410,30 1480,25 1494,18",
      "180,545 195,560 175,630 155,715 160,750 100,1260 70,1518",
      "240,630 250,650 290,710 325,755 345,757 358,752 375,758 425,750 455,730 485,726 600,727 615,765 625,802 685,815 690,825 672,1183 850,1325",
      "0,1210 10,1205 30,1235 50,1260 90,1275",
      "1162,1145 1173,1265",
      "1145,1265 1205,1230",
      "905,1460 930,1488 960,1500 975,1495 998,1518",
      "1090,1518 1108,1512 1115,1495 1135,1493 1195,1462 1310,1502 1400,1518",
    ],
    boundary: ["0,332 180,268 265,240 275,233 300,230 540,148 560,150 575,137 1020,0"],
  },
];

const fills: Partial<Record<Layer, string>> = {
  urban: "#dfdecb",
  grass: "#cfdfbb",
  wood: "#c0d7a7",
  water: "#94c0e2",
};

const strokes: Partial<Record<Layer, { color: string; width: number; dash?: string }>> = {
  river: { color: "#94c0e2", width: 2.2 },
  wideRiver: { color: "#94c0e2", width: 3.4 },
  thinRiver: { color: "#94c0e2", width: 1.3 },
  minor: { color: "#ffffff", width: 1.5 },
  road: { color: "#ffffff", width: 2.6 },
  trunk: { color: "#ffffff", width: 4 },
  path: { color: "#b3b3ae", width: 3, dash: "6 4" },
  rail: { color: "#b7ada1", width: 1.4 },
  mainRail: { color: "#b7ada1", width: 2.4 },
};

const order: Layer[] = [
  "urban",
  "grass",
  "wood",
  "water",
  "river",
  "thinRiver",
  "wideRiver",
  "minor",
  "road",
  "trunk",
  "path",
  "rail",
  "mainRail",
  "area",
  "boundary",
];

function Shape({ layer, points }: { layer: Layer; points: string }) {
  if (fills[layer]) return <polygon points={points} fill={fills[layer]} />;
  if (layer === "area")
    return (
      <polygon
        points={points}
        fill="#8786b5"
        stroke="#0b0c0c"
        strokeWidth={2.2}
        vectorEffect="non-scaling-stroke"
      />
    );
  if (layer === "boundary")
    return (
      <g fill="none" strokeWidth={3.9} strokeLinejoin="round">
        <polyline points={points} stroke="#c0605e" vectorEffect="non-scaling-stroke" />
        <polyline points={points} stroke="#ff0000" strokeDasharray="3.8 3.8" vectorEffect="non-scaling-stroke" />
      </g>
    );
  const s = strokes[layer]!;
  return (
    <polyline
      points={points}
      fill="none"
      stroke={s.color}
      strokeWidth={s.width}
      strokeDasharray={s.dash}
      strokeLinejoin="round"
      vectorEffect="non-scaling-stroke"
    />
  );
}

const places: [string, number, number, number?][] = [
  ["Toll Bar", 152.5, 805.7],
  ["Stamford", 274.5, 881],
  ["Tinwell", 162.4, 912.7],
  ["Barnack", 513.4, 983],
  ["Ashton", 624.3, 958],
  ["Ufford", 586, 1035.7],
  ["Wittering", 392, 1110],
  ["n", 69, 1013],
  ["Towngate", 788.4, 711],
  ["Market Deeping", 813.6, 753.3],
  ["Maxey", 757.9, 839.3],
  ["Etton", 818.7, 919.3],
  ["Peakirk", 959, 920.7],
  ["Newborough", 1131.8, 950.7],
  ["Marholm", 848.6, 1141.7],
  ["Eye", 1238.5, 1116],
  ["Crowland", 1306, 752.3],
  ["Thorney", 1509.3, 1044.3],
  ["Gedney Hill", 1798, 708],
  ["Rogue's Alley", 1899, 987.3],
  ["Murrow", 1960, 933],
  ["Guyhirn", 2017, 830],
  ["Wansford", 485, 1267.7],
  ["Sutton", 603.5, 1285],
  ["Upton", 649, 1214.3],
  ["Castor", 738, 1315],
  ["Yarwell", 471.3, 1344.3],
  ["Nassington", 440.4, 1421.7],
  ["Apethorpe", 236.9, 1436.7],
  ["Woodnewton", 288.4, 1499.3],
  ["Elton", 546.2, 1531.7],
  ["Southwick", 217.7, 1614],
  ["Warmington", 503.3, 1669],
  ["Glapthorn", 225, 1699],
  ["Peterborough", 1060.9, 1315, 30],
  ["Alwalton", 774.7, 1438.3],
  ["Haddon", 774.5, 1596],
  ["Morborne", 794.5, 1652.7],
  ["Yaxley", 1026.4, 1605],
  ["Farcet", 1106.6, 1510],
  ["Pondersbridge", 1393.5, 1641.7],
  ["Whittlesey", 1457.3, 1409],
  ["Coates", 1616.6, 1369.3],
];

function MapCanvas() {
  return (
    <svg viewBox="60 706 1920 1000" className="block h-full w-full bg-[#e4e4d4]">
      {order.map((layer) =>
        sheets.map((sheet) => (
          <g key={`${layer}-${sheet.x}-${sheet.y}`} transform={`translate(${sheet.x} ${sheet.y}) scale(0.42092 0.33333)`}>
            {(sheet[layer] ?? []).map((points) => (
              <Shape key={points} layer={layer} points={points} />
            ))}
          </g>
        )),
      )}
      <g
        className="font-['Noto_Sans',sans-serif]"
        textAnchor="middle"
        fill="#0d0d0d"
        stroke="#ffffff"
        strokeOpacity={0.8}
        strokeWidth={7}
        strokeLinejoin="round"
        paintOrder="stroke"
      >
        {places.map(([name, x, y, size = 25.2]) => (
          <text key={name} x={x} y={y} fontSize={size}>
            {name}
          </text>
        ))}
      </g>
    </svg>
  );
}

const control = "flex h-[55px] w-[55.2px] items-center justify-center";

function MapControls() {
  return (
    <div className="absolute top-[19px] right-[20px] flex flex-col gap-[19px]">
      <div className="divide-y-2 divide-[#dddddd] rounded-[8px] bg-white shadow-[0_0_0_4px_rgba(0,0,0,0.1)]">
        <div className={control}>
          <svg viewBox="0 0 29 29" className="size-[55px]" fill="#333">
            <path d="M14.5 8.5c-.75 0-1.5.75-1.5 1.5v3h-3c-.75 0-1.5.75-1.5 1.5S9.25 16 10 16h3v3c0 .75.75 1.5 1.5 1.5S16 19.75 16 19v-3h3c.75 0 1.5-.75 1.5-1.5S19.75 13 19 13h-3v-3c0-.75-.75-1.5-1.5-1.5" />
          </svg>
        </div>
        <div className={control}>
          <svg viewBox="0 0 29 29" className="size-[55px]" fill="#333">
            <path d="M10 13c-.75 0-1.5.75-1.5 1.5S9.25 16 10 16h9c.75 0 1.5-.75 1.5-1.5S19.75 13 19 13z" />
          </svg>
        </div>
        <div className={control}>
          <svg viewBox="0 0 29 29" className="size-[55px]" fill="#333">
            <path d="m10.5 14 4-8 4 8z" />
            <path fill="#ccc" d="m10.5 16 4 8 4-8z" />
          </svg>
        </div>
      </div>
      <div className="rounded-[8px] bg-white shadow-[0_0_0_4px_rgba(0,0,0,0.1)]">
        <div className={control}>
          <svg viewBox="0 0 29 29" className="size-[55px]" fill="#333">
            <path d="M24 16v5.5c0 1.75-.75 2.5-2.5 2.5H16v-1l3-1.5-4-5.5 1-1 5.5 4 1.5-3zM6 16l1.5 3 5.5-4 1 1-4 5.5 3 1.5v1H7.5C5.75 24 5 23.25 5 21.5V16zm7-11v1l-3 1.5 4 5.5-1 1-5.5-4L6 13H5V7.5C5 5.75 5.75 5 7.5 5zm11 2.5c0-1.75-.75-2.5-2.5-2.5H16v1l3 1.5-4 5.5 1 1 5.5-4 1.5 3h1z" />
          </svg>
        </div>
      </div>
    </div>
  );
}

function MapPanel() {
  return (
    <div className="relative mt-[99.4px] ml-[57.1px] h-[952.2px] w-[1828.2px] overflow-hidden">
      <MapCanvas />
      <MapControls />
      <div className="absolute bottom-[19px] left-[18px] h-[42px] w-[139.5px] border-4 border-t-0 border-[#333] bg-white/75 pl-[10px] font-['Liberation_Sans',sans-serif] text-[19px] leading-[37px] text-[#333]">
        3 km
      </div>
      <div className="absolute right-[20px] bottom-[19px] flex h-[45.7px] w-[603.7px] items-center rounded-full bg-white pl-[15px] text-[22.6px] leading-[44px] whitespace-nowrap text-[#404040]">
        <span>
          MapLibre <span className="text-black">|</span> © MapTiler © OpenStreetMap contributors
        </span>
        <span className="absolute right-0 flex size-[45.7px] rounded-full bg-[#f2f2f2]">
          <svg viewBox="0 0 20 20" className="size-full" fillRule="evenodd">
            <path d="M4 10a6 6 0 1 0 12 0 6 6 0 1 0-12 0m5-3a1 1 0 1 0 2 0 1 1 0 1 0-2 0m0 3a1 1 0 1 1 2 0v3a1 1 0 1 1-2 0" />
          </svg>
        </span>
      </div>
    </div>
  );
}

function Crown() {
  return (
    <svg viewBox="0 0 132 97" className="h-[50.9px] w-[69.3px]" fill="#fff">
      <path d="M25 30.2c3.5 1.5 7.7-.2 9.1-3.7 1.5-3.6-.2-7.8-3.9-9.2-3.6-1.4-7.6.3-9.1 3.9-1.4 3.5.3 7.5 3.9 9zM9 39.5c3.6 1.5 7.8-.2 9.2-3.7 1.5-3.6-.2-7.8-3.9-9.1-3.6-1.5-7.6.2-9.1 3.8-1.4 3.5.3 7.5 3.8 9zM4.4 57.2c3.5 1.5 7.7-.2 9.1-3.8 1.5-3.6-.2-7.7-3.9-9.1-3.5-1.5-7.6.3-9.1 3.8-1.4 3.5.3 7.6 3.9 9.1zm38.3-21.4c3.5 1.5 7.7-.2 9.1-3.8 1.5-3.6-.2-7.7-3.9-9.1-3.6-1.5-7.6.3-9.1 3.8-1.3 3.6.4 7.7 3.9 9.1zm64.4-5.6c-3.6 1.5-7.8-.2-9.1-3.7-1.5-3.6.2-7.8 3.8-9.2 3.6-1.4 7.7.3 9.2 3.9 1.3 3.5-.4 7.5-3.9 9zm15.9 9.3c-3.6 1.5-7.7-.2-9.1-3.7-1.5-3.6.2-7.8 3.7-9.1 3.6-1.5 7.7.2 9.2 3.8 1.5 3.5-.3 7.5-3.8 9zm4.7 17.7c-3.6 1.5-7.8-.2-9.2-3.8-1.5-3.6.2-7.7 3.9-9.1 3.6-1.5 7.7.3 9.2 3.8 1.3 3.5-.4 7.6-3.9 9.1zM89.3 35.8c-3.6 1.5-7.8-.2-9.2-3.8-1.4-3.6.2-7.7 3.9-9.1 3.6-1.5 7.7.3 9.2 3.8 1.4 3.6-.3 7.7-3.9 9.1zM69.7 17.7l8.9 4.7V9.3l-8.9 2.8c-.2-.3-.5-.6-.9-.9L72.4 0H59.6l3.5 11.2c-.3.3-.6.5-.9.9l-8.8-2.8v13.1l8.8-4.7c.3.3.6.7.9.9l-5 15.4v.1c-.2.8-.4 1.6-.4 2.4 0 4.1 3.1 7.5 7 8.1h.2c.3 0 .7.1 1 .1.4 0 .7 0 1-.1h.2c4-.6 7.1-4.1 7.1-8.1 0-.8-.1-1.7-.4-2.4V34l-5.1-15.4c.4-.2.7-.6 1-.9zM66 92.8c16.9 0 32.8 1.1 47.1 3.2 4-16.9 8.9-26.7 14-33.5l-9.6-3.4c1 4.9 1.1 7.2 0 10.2-1.5-1.4-3-4.3-4.2-8.7L108.6 76c2.8-2 5-3.2 7.5-3.3-4.4 9.4-10 11.9-13.6 11.2-4.3-.8-6.3-4.6-5.6-7.9 1-4.7 5.7-5.9 8-.5 4.3-8.7-3-11.4-7.6-8.8 7.1-7.2 7.9-13.5 2.1-21.1-8 6.1-8.1 12.3-4.5 20.8-4.7-5.4-12.1-2.5-9.5 6.2 3.4-5.2 7.9-2 7.2 3.1-.6 4.3-6.4 7.8-13.5 7.2-10.3-.9-10.9-8-11.2-13.8 2.5-.5 7.1 1.8 11 7.3L80.2 60c-4.1 4.4-8 5.3-12.3 5.4 1.4-4.4 8-11.6 8-11.6H55.5s6.4 7.2 7.9 11.6c-4.2-.1-8-1-12.3-5.4l1.4 16.4c3.9-5.5 8.5-7.7 10.9-7.3-.3 5.8-.9 12.8-11.1 13.8-7.2.6-12.9-2.9-13.5-7.2-.7-5 3.8-8.3 7.1-3.1 2.7-8.7-4.6-11.6-9.4-6.2 3.7-8.5 3.6-14.7-4.6-20.8-5.8 7.6-5 13.9 2.2 21.1-4.7-2.6-11.9.1-7.7 8.8 2.3-5.5 7.1-4.2 8.1.5.7 3.3-1.3 7.1-5.7 7.9-3.5.7-9-1.8-13.5-11.2 2.5.1 4.7 1.3 7.5 3.3l-4.7-15.4c-1.2 4.4-2.7 7.2-4.3 8.7-1.1-3-.9-5.3 0-10.2l-9.5 3.4c5 6.9 9.9 16.7 14 33.5 14.8-2.1 30.8-3.2 47.7-3.2z" />
    </svg>
  );
}

const checks = [
  { label: "50 rows found", tracking: "tracking-[-0.55px]" },
  { label: "All columns matched", tracking: "tracking-[-0.72px]" },
  { label: "All rows have unique references", tracking: "tracking-[-0.7px]" },
  { label: "All rows have a name", tracking: "tracking-[-1px]" },
  { label: "All fields have valid data", tracking: "tracking-[-0.65px]" },
];

export default function App() {
  return (
    <div className={`${sans} min-h-[4096px] w-[1950px] bg-white text-[#0b0c0c]`}>
      <header>
        <div className="flex h-[95.2px] items-start gap-[12px] bg-[#0b0c0c] pt-[21px] pl-[60.7px]">
          <Crown />
          <span className="font-['Inter',sans-serif] text-[54.3px] leading-[55px] font-bold tracking-[-0.4px] text-white">
            GOV.UK
          </span>
        </div>
        <div className="h-[17.1px] bg-[#1d70b8]" />
        <div className="h-[125.7px] border-b-2 border-[#b1b4b6] bg-[#f3f2f1] pt-[40px] pl-[60px] text-[36.2px] leading-[40px] font-bold tracking-[-0.17px]">
          Check your planning data
        </div>
      </header>

      <nav className="flex items-start gap-[13px] pt-[38.4px] pl-[58px]">
        <svg viewBox="0 0 11 20" className="mt-[7px] h-[19.5px] w-[11px]" fill="none" stroke="#505a5f" strokeWidth={2}>
          <path d="M10.3 0.7 1.6 10l8.7 9.3" />
        </svg>
        <a className="border-b-2 border-[#0b0c0c] text-[30.5px] leading-[32px] tracking-[-0.5px]">Back</a>
      </nav>

      <main>
        <p className="mt-[99.1px] pl-[62px] text-[51.4px] leading-[56px] tracking-[-0.46px] text-[#505a5f]">
          Article 4 direction area
        </p>
        <h1 className="mt-[11.3px] pl-[60.5px] text-[91.4px] leading-[96px] font-bold tracking-[-0.8px]">
          Your data has been checked
        </h1>

        <MapPanel />

        <h2 className="mt-[92.8px] pl-[56px] text-[68.6px] leading-[72px] font-bold">Checks that passed</h2>
        <ul className="mt-[61.8px] ml-[57.1px] w-[1199.7px] border-b-2 border-[#b1b4b6] pb-[2px]">
          {checks.map((check) => (
            <li
              key={check.label}
              className="flex h-[95.2px] items-start justify-between border-t-2 border-[#b1b4b6] text-[36.2px]"
            >
              <span className={`${check.tracking} pt-[22.7px] leading-[40px]`}>{check.label}</span>
              <span className="mt-[18.9px] h-[57.1px] w-[142.8px] bg-[#cce2d8] text-center leading-[55px] tracking-[-1.4px] text-[#005a30]">
                Passed
              </span>
            </li>
          ))}
        </ul>

        <p className="mt-[95px] pl-[69.5px] text-[36.2px] leading-[40px] tracking-[-0.92px]">
          Your data is ready to submit
        </p>

        <div className="mt-[106.6px] flex items-start gap-[45.5px] pl-[62.8px] text-[36.2px]">
          <button className="h-[72.4px] w-[190.5px] bg-[#00703c] text-center leading-[74px] text-white shadow-[0_3.8px_0_#002d18]">
            Continue
          </button>
          <a className="mt-[19.1px] border-b-2 border-[#1d70b8] leading-[36px] tracking-[-0.65px] text-[#1d70b8]">
            Upload a new version
          </a>
        </div>
      </main>
    </div>
  );
}
